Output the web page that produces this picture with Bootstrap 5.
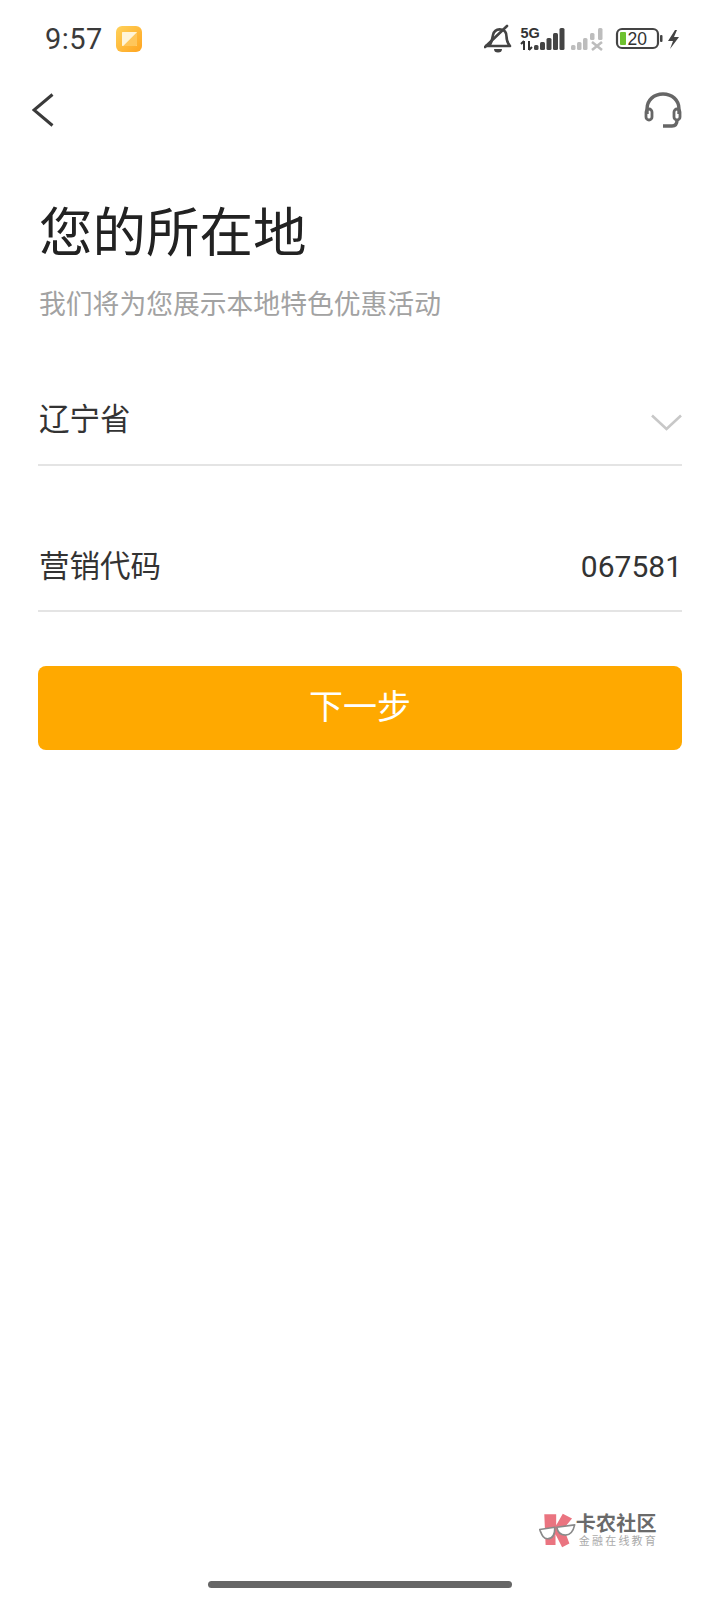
<!DOCTYPE html>
<html lang="zh-CN">
<head>
    <meta charset="UTF-8">
    <meta name="viewport" content="width=device-width, initial-scale=1.0">
    <title>您的所在地</title>
    <link href="https://cdn.jsdelivr.net/npm/bootstrap@5.3.0/dist/css/bootstrap.min.css" rel="stylesheet">
    <style>
        body {
            background: #fff;
            font-family: "Liberation Sans", "Noto Sans CJK SC", sans-serif;
        }
        .screen {
            width: 720px;
            height: 1600px;
            color: #333;
            font-family: "Noto Sans", "Noto Sans CJK SC", sans-serif;
        }
        .status-bar { height: 78px; padding: 0 39px 0 45px; }
        .clock { font-size: 29px; color: #3a3a3a; line-height: 1; letter-spacing: .5px; font-family: Roboto, sans-serif; }
        .app-icon { width: 26px; height: 26px; margin-left: 13px; }
        .status-icons svg { display: block; }
        .top-bar { height: 64px; padding: 0 38px 0 32px; }
        .form-wrap { padding: 0 38px; }
        .page-title {
            font-size: 53.500px;
            line-height: 72px;
            margin: 54px 0 0 1px;
            font-weight: 400;
            color: #222;
        }
        .page-sub {
            font-size: 26.800px;
            line-height: 40px;
            margin: 16px 0 0 1px;
            color: #a2a2a2;
        }
        .field-row {
            border-bottom: 2px solid #e4e4e4;
            font-size: 30.500px;
            line-height: 40px;
            padding-left: 1px;
        }
        .field-region { height: 105px; margin-top: 37px; padding-top: 37px; }
        .field-code { height: 102px; margin-top: 44px; padding-top: 35px; }
        .field-value { font-size: 30px; line-height: 44px; font-family: Roboto, sans-serif; }
        .next-btn {
            width: 100%;
            height: 84px;
            margin-top: 54px;
            padding: 0 0 4px;
            background: #ffa900;
            border: 0;
            border-radius: 8px;
            color: #fff;
            font-size: 34px;
        }
        .next-btn:hover, .next-btn:active { background: #ffa900 !important; color: #fff !important; }
        .watermark { margin: 0 62px 0 0; }
        .wm-title { font-size: 20px; line-height: 21px; font-weight: 700; color: #6a6a6a; letter-spacing: .2px; }
        .wm-sub { font-size: 11px; line-height: 14px; color: #aaa; letter-spacing: 2.200px; padding-left: 3px; }
        .home-bar {
            width: 304px;
            height: 7px;
            margin: 32px auto 12px;
            border-radius: 4px;
            background: #666;
        }
    </style>
</head>
<body>
    <div class="screen d-flex flex-column">
        <!-- status bar -->
        <div class="status-bar d-flex align-items-center justify-content-between">
            <div class="d-flex align-items-center">
                <span class="clock">9:57</span>
                <svg class="app-icon" viewBox="0 0 26 26">
                    <defs>
                        <linearGradient id="appGrad" x1="0" y1="0" x2="1" y2="1">
                            <stop offset="0" stop-color="#ffd25a"/>
                            <stop offset="1" stop-color="#ffa41f"/>
                        </linearGradient>
                    </defs>
                    <rect width="26" height="26" rx="6" fill="url(#appGrad)"/>
                    <rect x="6" y="6" width="15" height="14" rx="1" fill="#ffe6a8"/>
                    <path d="M7 20L21 6V18.500a1.500 1.500 0 0 1-1.500 1.500z" fill="#ffc65a"/>
                    <path d="M6 7a1 1 0 0 1 1-1H21L7 20H7a1 1 0 0 1-1-1z" fill="#fff4d8"/>
                </svg>
            </div>
            <div class="status-icons d-flex align-items-center">
                <svg width="197" height="30" viewBox="484 24 197 30">
                    <!-- muted bell -->
                    <path d="M489 46c3-3 3-7 4-11 1-4 4-6 8-5.500 4 .5 5.500 3.500 5.500 7 0 3 .5 6 3.500 9.500H485" fill="none" stroke="#444" stroke-width="2.600" stroke-linejoin="round"/>
                    <path d="M485 47L507 26" stroke="#444" stroke-width="2.600" stroke-linecap="round"/>
                    <path d="M494 49h8a4 3.500 0 0 1-8 0z" fill="#444"/>
                    <!-- 5G signal -->
                    <text x="520.500" y="37.500" font-family="Liberation Sans, sans-serif" font-size="14.500" font-weight="700" fill="#333">5G</text>
                    <path d="M524 41v9M521 44l3-3M529 41v9M532 47l-3 3" stroke="#333" stroke-width="2" fill="none"/>
                    <g fill="#444">
                        <rect x="534" y="45" width="4.500" height="5" rx="1.500"/>
                        <rect x="540" y="42" width="5" height="8" rx="1.500"/>
                        <rect x="546.500" y="38" width="5" height="12" rx="1.500"/>
                        <rect x="553" y="33" width="5" height="17" rx="1.500"/>
                        <rect x="559.500" y="28" width="5" height="22" rx="1.500"/>
                    </g>
                    <g fill="#bdbdbd">
                        <rect x="571" y="45" width="4.500" height="5" rx="1.500"/>
                        <rect x="577" y="42" width="4.500" height="8" rx="1.500"/>
                        <rect x="583" y="38" width="4.500" height="12" rx="1.500"/>
                        <rect x="590" y="33" width="4.500" height="7" rx="1.500"/>
                        <rect x="598" y="28" width="4.500" height="12" rx="1.500"/>
                    </g>
                    <path d="M592 42l10 8M602 42l-10 8" stroke="#bdbdbd" stroke-width="2.600"/>
                    <!-- battery -->
                    <rect x="617" y="29" width="41" height="19" rx="5" fill="none" stroke="#444" stroke-width="2.200"/>
                    <rect x="620" y="32" width="6" height="13" rx="1" fill="#6fc12f"/>
                    <text x="627.500" y="45" font-family="Liberation Sans, sans-serif" font-size="17.500" fill="#333">20</text>
                    <rect x="660" y="35" width="2.500" height="7" rx="1" fill="#444"/>
                    <path d="M675 30l-7 11h5l-3 8 9-12h-5l3-7z" fill="#444"/>
                </svg>
            </div>
        </div>

        <!-- back + support -->
        <div class="top-bar d-flex align-items-center justify-content-between">
            <svg width="22" height="34" viewBox="0 0 22 34">
                <path d="M20.500 1.500L2 17l18.500 15.500" fill="none" stroke="#3a3a3a" stroke-width="3"/>
            </svg>
            <svg width="38" height="36" viewBox="0 0 38 36">
                <path d="M3 22V17C3 8 10 2 19 2s16 6 16 15v5" fill="none" stroke="#666" stroke-width="3.400"/>
                <rect x="2" y="17" width="6" height="11" rx="3" fill="none" stroke="#666" stroke-width="2.800"/>
                <rect x="30" y="17" width="6" height="11" rx="3" fill="none" stroke="#666" stroke-width="2.800"/>
                <path d="M33 28c0 4-2 6-5 6H19" fill="none" stroke="#666" stroke-width="3.400"/>
            </svg>
        </div>

        <div class="form-wrap">
            <h1 class="page-title">您的所在地</h1>
            <p class="page-sub mb-0">我们将为您展示本地特色优惠活动</p>

            <div class="field-row field-region d-flex justify-content-between">
                <span>辽宁省</span>
                <svg class="mt-3" width="31" height="17" viewBox="0 0 31 17">
                    <path d="M1 1.500L15.500 15 30 1.500" fill="none" stroke="#c8c8c8" stroke-width="2.600"/>
                </svg>
            </div>
            <div class="field-row field-code d-flex justify-content-between">
                <span>营销代码</span>
                <span class="field-value">067581</span>
            </div>
            <button type="button" class="btn next-btn">下一步</button>
        </div>

        <div class="mt-auto">
            <div class="watermark d-flex justify-content-end align-items-center">
                <svg width="37" height="37" viewBox="60 65 112 112">
                    <path d="M76 72H112V105L132 70 160 85 135 115 152 160 130 172 110 132V165H80z" fill="#ea7480"/>
                    <path d="M62 118L108 111C108 128 104 146 86 146 72 146 68 132 62 118z" fill="#fff" stroke="#8a8a8a" stroke-width="5" stroke-linejoin="round"/>
                    <path d="M114 111L168 104C164 122 156 135 140 135 124 135 116 126 114 111z" fill="#fff" stroke="#8a8a8a" stroke-width="5" stroke-linejoin="round"/>
                </svg>
                <div>
                    <div class="wm-title">卡农社区</div>
                    <div class="wm-sub">金融在线教育</div>
                </div>
            </div>
            <div class="home-bar"></div>
        </div>
    </div>

    <script src="https://cdn.jsdelivr.net/npm/bootstrap@5.3.0/dist/js/bootstrap.bundle.min.js"></script>
</body>
</html>
